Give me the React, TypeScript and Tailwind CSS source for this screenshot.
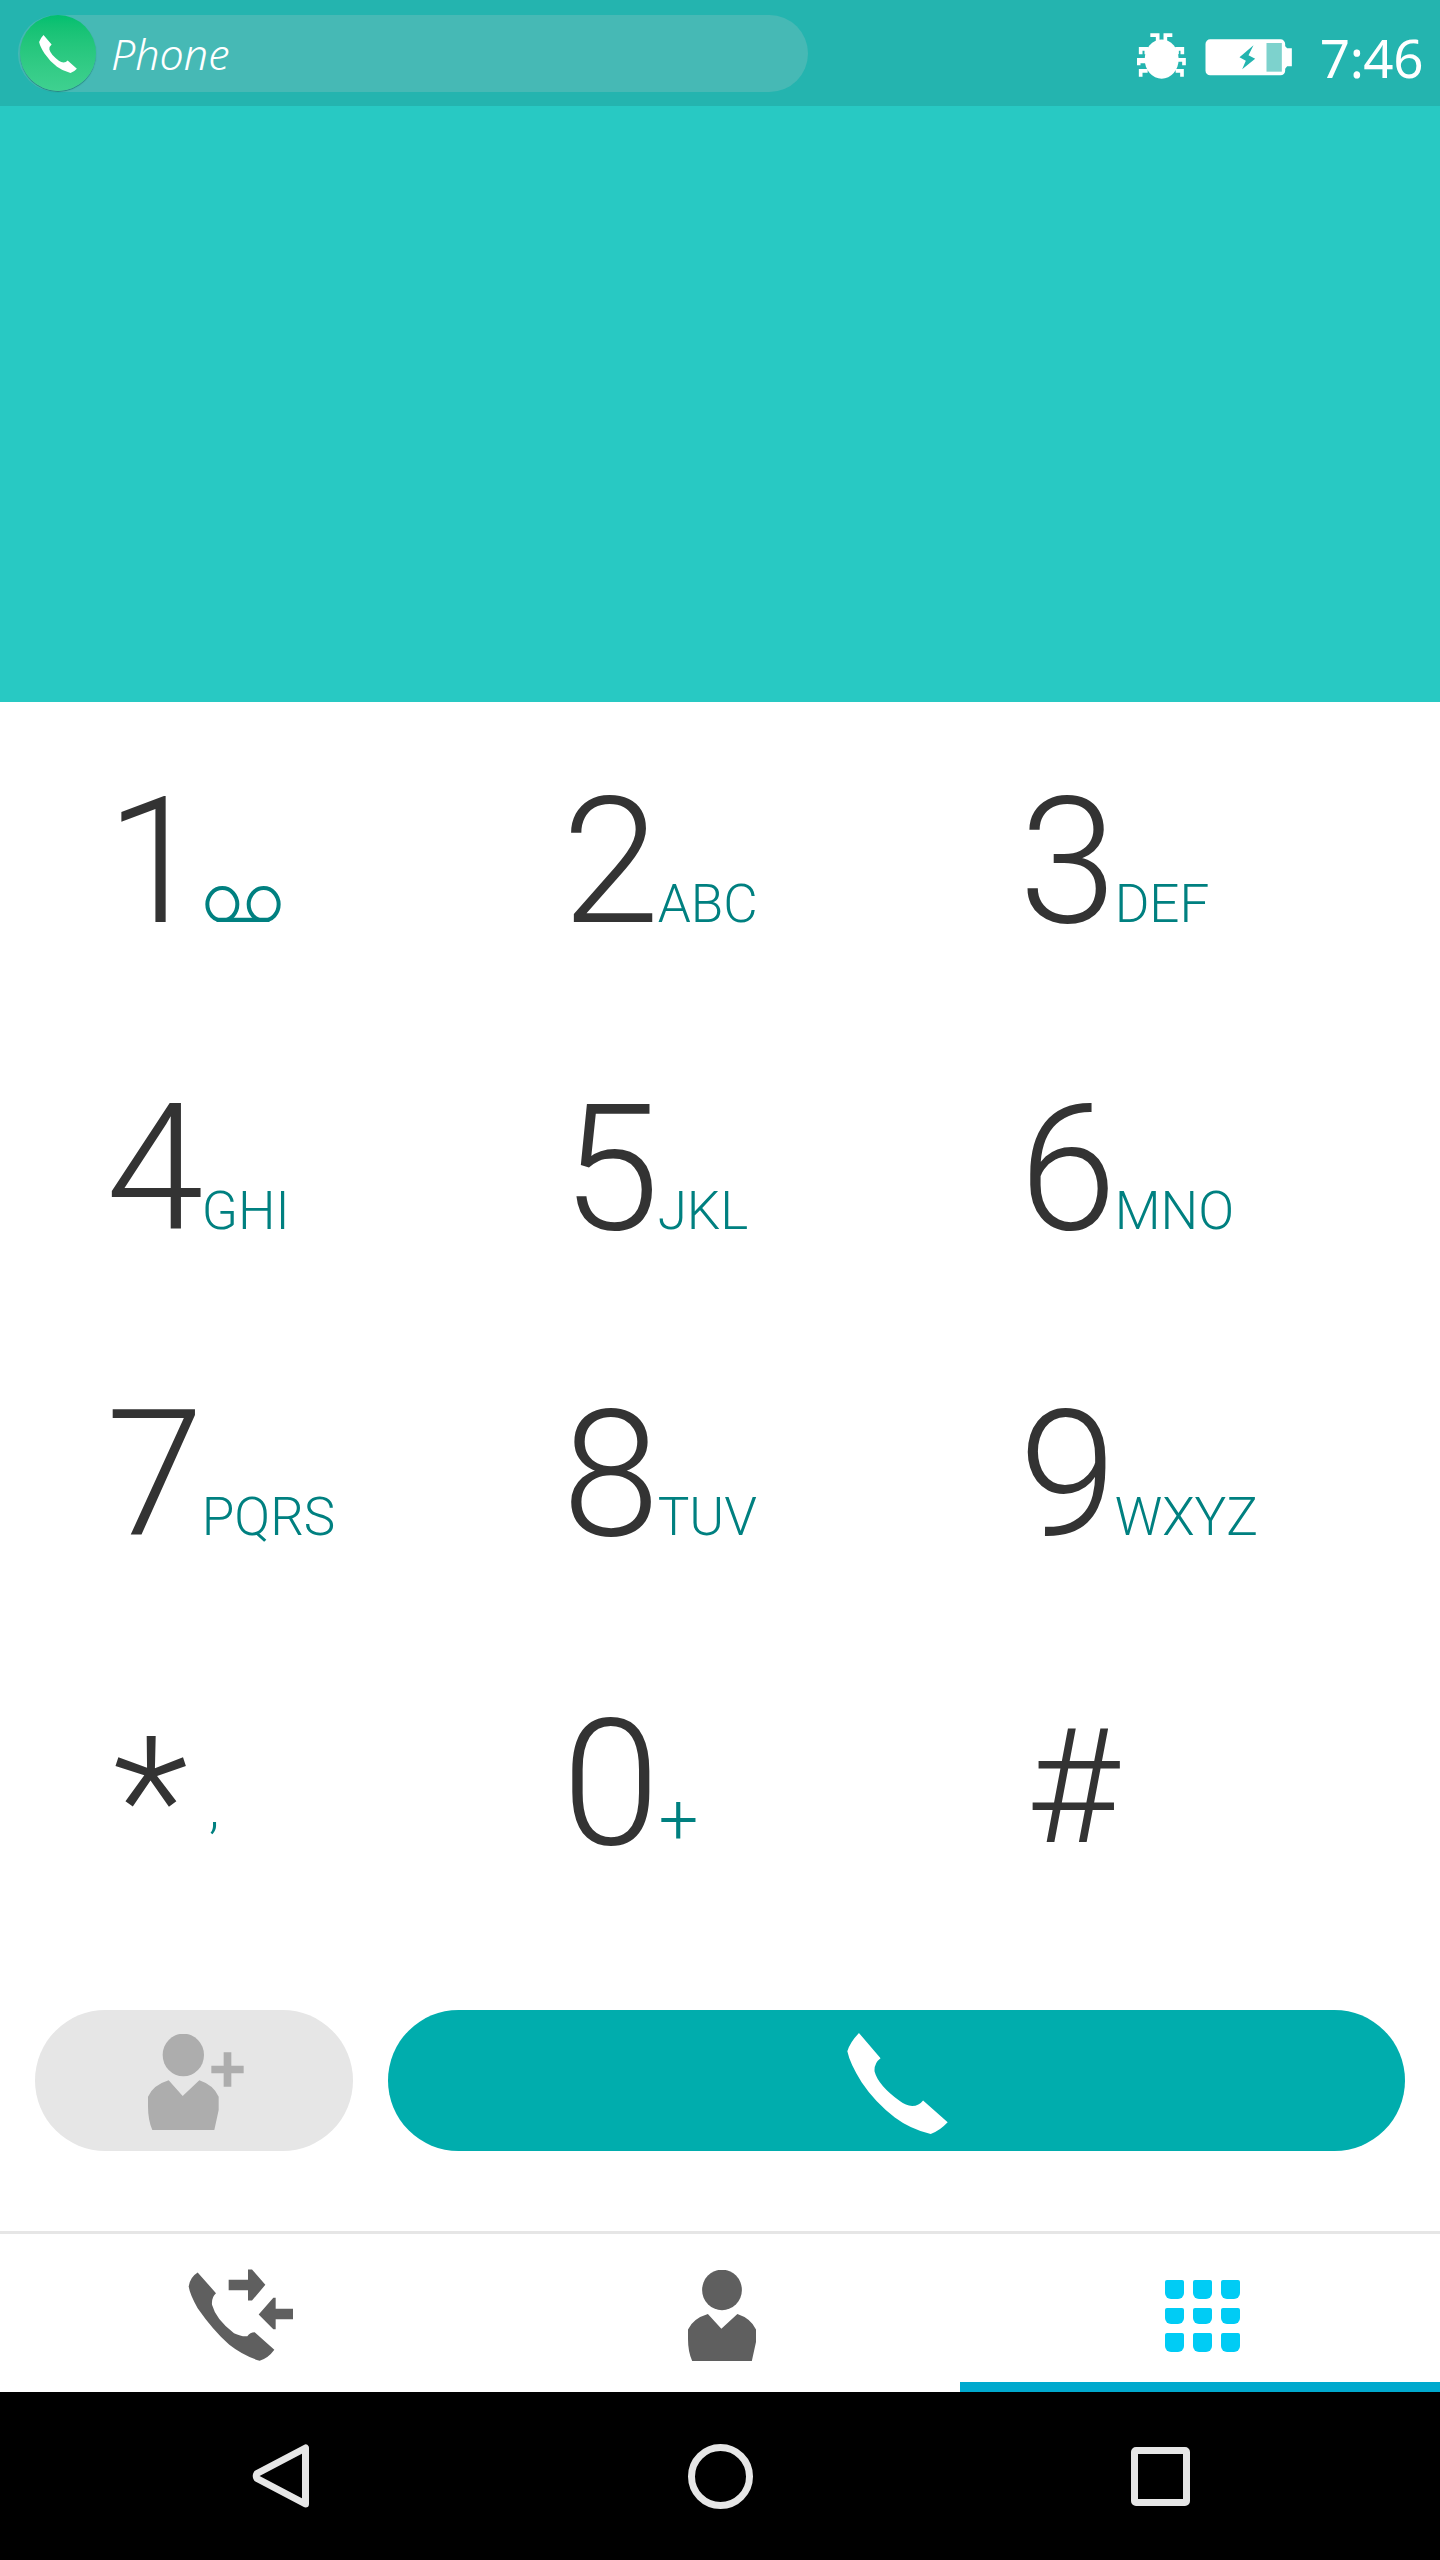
import React from "react";

type Key = { digit: string; sub?: string; digitClass?: string; subClass?: string };

const keys: Key[] = [
  { digit: "1" },
  { digit: "2", sub: "ABC" },
  { digit: "3", sub: "DEF" },
  { digit: "4", sub: "GHI" },
  { digit: "5", sub: "JKL" },
  { digit: "6", sub: "MNO" },
  { digit: "7", sub: "PQRS" },
  { digit: "8", sub: "TUV" },
  { digit: "9", sub: "WXYZ" },
  {
    digit: "*",
    sub: ",",
    digitClass: "relative left-[7px] top-[17px] w-[103px] text-[177px]",
    subClass: "relative top-[-18px] text-[53px]",
  },
  { digit: "0", sub: "+", subClass: "-ml-px text-[70px]" },
  { digit: "#", digitClass: "ml-[7px] mt-[3px] text-[160px]" },
];

const handset =
  "M177 127 L242 203 Q222 218 224 243 Q235 285 300 332 Q318 346 337 347 Q358 346 370 330 L444 396 Q420 422 393 431 Q330 415 285 381 Q225 335 185 275 Q150 220 142 182 Q150 155 177 127 Z";

function Handset({ className }: { className: string }) {
  return (
    <svg viewBox="142 127 302 304" className={className} fill="currentColor">
      <path d={handset} />
    </svg>
  );
}

function Voicemail() {
  return (
    <svg viewBox="375 345 228 108" className="ml-px h-9 w-[76px]" fill="none" stroke="#008080" strokeWidth="12">
      <ellipse cx="427" cy="400" rx="45" ry="49" />
      <ellipse cx="551" cy="400" rx="45" ry="49" />
      <path d="M410 447H568" strokeWidth="13" />
    </svg>
  );
}

function StatusBar() {
  return (
    <header className="flex h-[106px] items-center bg-[#24b4af] pl-[18px] pr-[17px] text-white">
      <div className="flex h-[77px] w-[790px] items-center rounded-full bg-[#46b9b5]">
        <div className="ml-0.5 flex size-[76px] items-center justify-center rounded-full bg-linear-to-b from-[#00bf6f] to-[#3fd190] shadow-[0_1px_1px_rgba(0,80,70,0.5)]">
          <Handset className="mt-0.5 size-[38px]" />
        </div>
        <span className="ml-[15px] font-['Noto_Sans',sans-serif] text-[43px] leading-none font-light italic">Phone</span>
      </div>
      <svg viewBox="110 99 147 137" className="mt-[6px] ml-auto h-[46px] w-[49px]" fill="none" stroke="#fff" strokeWidth="11">
        <ellipse cx="184" cy="177" rx="51" ry="59" fill="#fff" stroke="none" />
        <path d="M150 105H172V125M216 105H195V125M121 162V146H138V162M246 162V146H230V162M115 195V179H138M115 184H140M251 195V179H228M121 230V212H142M245 230V212H226" />
      </svg>
      <svg viewBox="313 116 263 111" className="mt-[8px] ml-[18px] h-[37px] w-[88px]">
        <rect x="317" y="117" width="239" height="108" rx="14" fill="#fff" />
        <path d="M550 132L562 144H576V198H562L550 212Z" fill="#fff" />
        <rect x="500" y="128" width="46" height="86" fill="#7dd2cd" />
        <path d="M461 135L419 171L438 181L427 207L466 175L446 165Z" fill="#24b4af" />
      </svg>
      <span className="mt-[8px] ml-[28px] font-['Noto_Sans',sans-serif] text-[53px] leading-none font-normal tracking-[-0.5px]">
        7:46
      </span>
    </header>
  );
}

function Torso({ className, plus }: { className: string; plus?: boolean }) {
  return (
    <svg viewBox={plus ? "384 132 288 288" : "384 132 212 288"} preserveAspectRatio="none" className={className} fill="currentColor">
      <ellipse cx="490" cy="195" rx="62" ry="64" />
      <path d="M446 271L488 318L538 271Q580 285 596 320V360L583 420H397Q384 390 384 350V320Q400 285 446 271Z" />
      {plus && <path d="M611 187H634V227H671V250H634V290H611V250H574V227H611Z" />}
    </svg>
  );
}

function KeyButton({ k }: { k: Key }) {
  return (
    <button className="flex items-baseline text-left leading-[307px]">
      <span className={k.digitClass ?? "text-[176px]"}>{k.digit}</span>
      {k.sub ? (
        <span className={"text-[#008080] " + (k.subClass ?? "-ml-0.5 text-[53px]")}>{k.sub}</span>
      ) : (
        k.digit === "1" && <Voicemail />
      )}
    </button>
  );
}

function GridDots() {
  const columns = [0, 1, 2];
  return (
    <div className="mt-4 ml-1 grid grid-cols-3 grid-rows-[19px_16px_19px] gap-[9px]">
      {[0, 1, 2].flatMap((r) =>
        columns.map((c) => <div key={`${r}-${c}`} className="w-[19px] rounded-t-[2px] rounded-b-md bg-[#00ccf5]" />),
      )}
    </div>
  );
}

export default function App() {
  return (
    <div className="flex h-[2560px] w-[1440px] flex-col overflow-hidden bg-white font-[Roboto,sans-serif] font-light text-[#333]">
      <StatusBar />
      <div className="h-[596px] bg-[#28c9c3]" />
      <main className="grid h-[1308px] grid-cols-[456px_457px_1fr] grid-rows-[307px_306px_309px_307px] pt-[7px] pl-[106px]">
        {keys.map((k) => (
          <KeyButton key={k.digit} k={k} />
        ))}
      </main>
      <div className="flex h-[141px] gap-[35px] px-[35px]">
        <button className="flex w-[318px] items-center justify-center rounded-full bg-[#e6e6e6] text-[#adadad]">
          <Torso plus className="mt-[3px] ml-1 h-24 w-24" />
        </button>
        <button className="flex flex-1 items-center justify-center rounded-full bg-[#00adad] text-white">
          <Handset className="mt-[5px] ml-0.5 size-[101px]" />
        </button>
      </div>
      <nav className="mt-20 grid h-[161px] grid-cols-3 border-t-[3px] border-[#e6e6e6]">
        <button className="flex items-center justify-center text-[#5f5f5f]">
          <svg viewBox="81 148 318 275" className="mt-1 h-[92px] w-[106px]" fill="currentColor">
            <path d="M113 158L168 220Q154 232 156 255Q168 300 222 340Q245 351 262 349Q270 337 284 337L343 390Q325 415 299 423Q250 408 208 375Q158 330 113 265Q90 225 86 200Q90 172 113 158Z" />
            <path d="M206 180H264V149H276L316 195L276 242H264V211H206ZM399 267H347V234H340L296 284L340 328H347V298H399Z" />
          </svg>
        </button>
        <button className="flex items-center justify-center text-[#5f5f5f]">
          <Torso className="mt-1 ml-[3px] h-[91px] w-[68px]" />
        </button>
        <button className="flex items-center justify-center border-b-10 border-[#00a9ce]">
          <GridDots />
        </button>
      </nav>
      <footer className="flex h-[168px] items-center bg-black">
        <svg viewBox="0 0 58 66" className="ml-[252px] h-[66px] w-[58px]" fill="none" stroke="#e6e6e6" strokeWidth="7" strokeLinejoin="round">
          <path d="M53.5 5V61L5 35.500Q3.500 33 5 30.500Z" />
        </svg>
        <div className="ml-[378px] size-[65px] rounded-full border-[7px] border-[#e6e6e6]" />
        <div className="ml-[378px] size-[59px] rounded-[5px] border-[7px] border-[#e6e6e6]" />
      </footer>
    </div>
  );
}
